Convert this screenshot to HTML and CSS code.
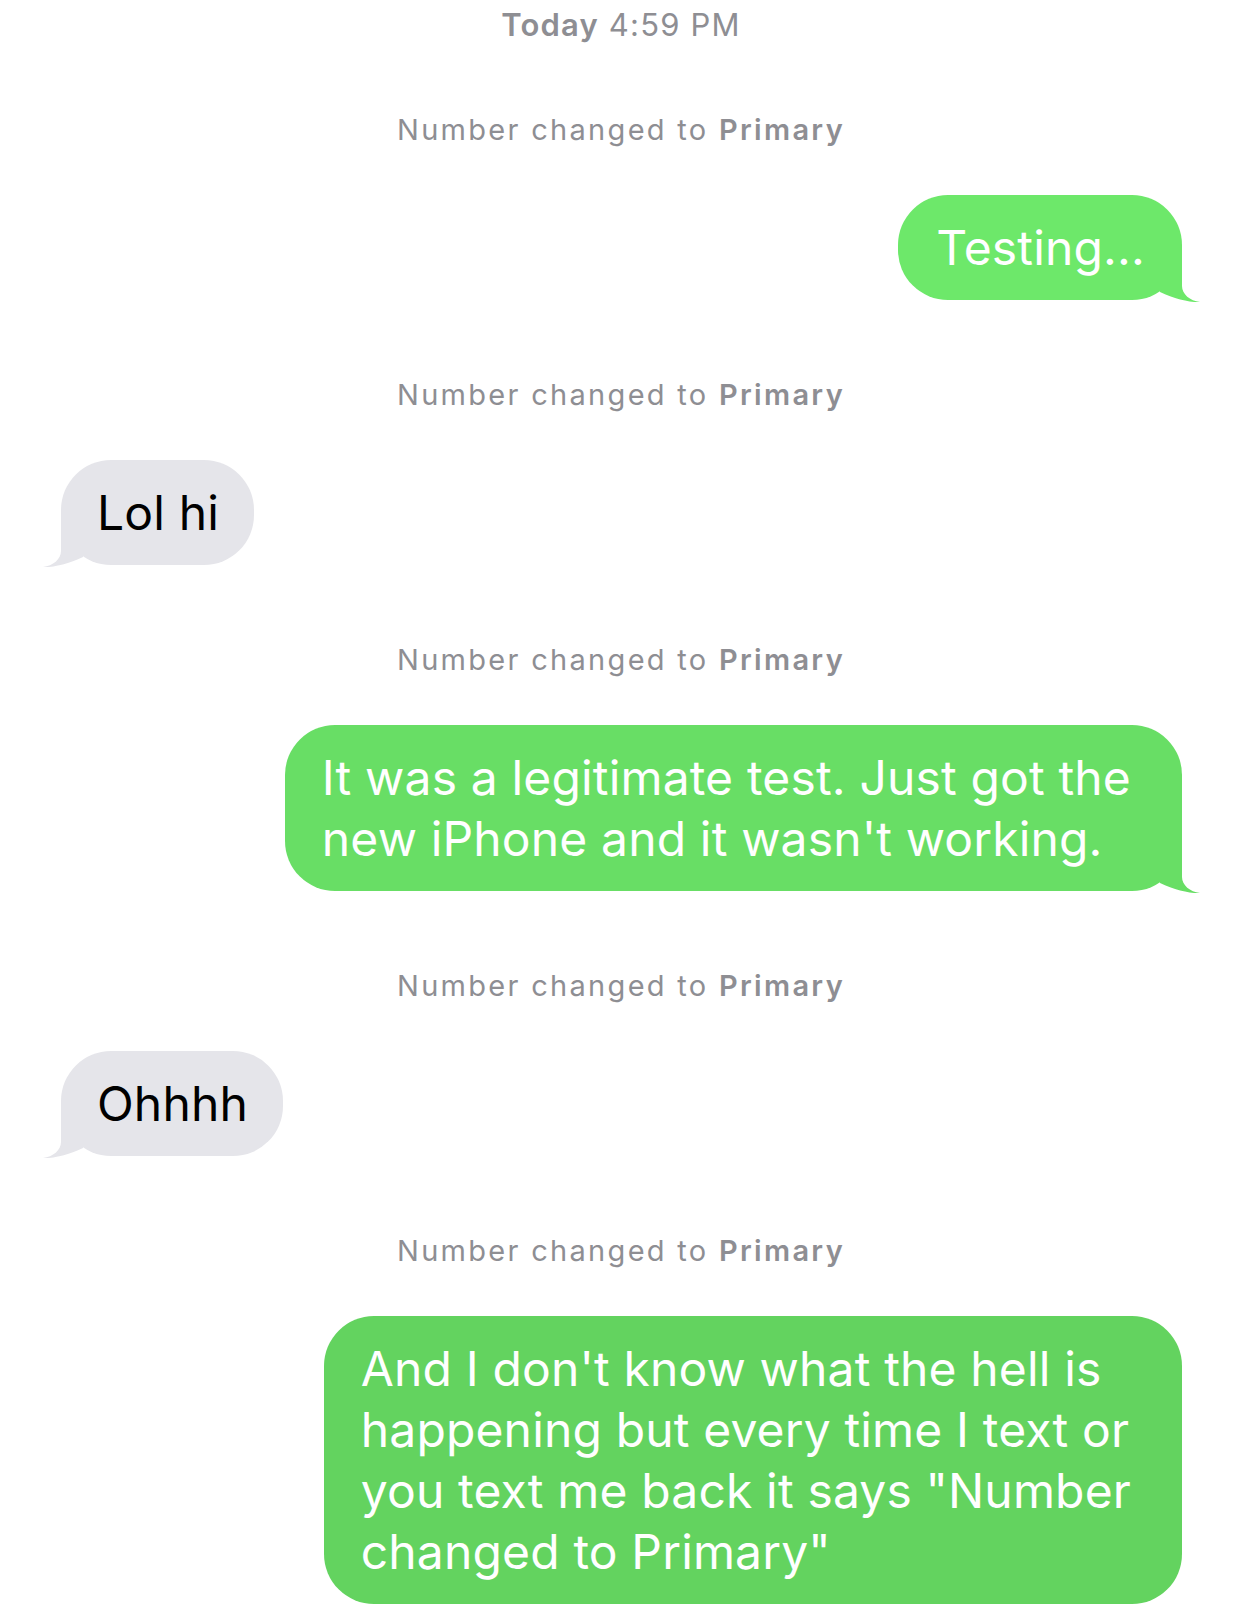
FILE: index.html
```html
<!DOCTYPE html>
<html lang="en">
<head>
<meta charset="utf-8">
<title>Messages</title>
<link rel="stylesheet" href="styles.css">
</head>
<body>
<main class="thread">
  <div class="stamp"><b>Today</b> 4:59 PM</div>

  <div class="sys">Number changed to <b>Primary</b></div>
  <div class="row out">
    <div class="bubble g1">Testing...<svg class="tail" viewBox="-22 -50 40 53" width="40" height="53"><path d="M0,-50 L0,-14 C0,-6 8,1 18,2 C8,2.5 -8,-1 -22,-8 L-22,-50 Z" fill="currentColor"/></svg></div>
  </div>

  <div class="sys">Number changed to <b>Primary</b></div>
  <div class="row in">
    <div class="bubble grey">Lol hi<svg class="tail" viewBox="-22 -50 40 53" width="40" height="53"><path d="M0,-50 L0,-14 C0,-6 8,1 18,2 C8,2.5 -8,-1 -22,-8 L-22,-50 Z" fill="currentColor"/></svg></div>
  </div>

  <div class="sys">Number changed to <b>Primary</b></div>
  <div class="row out">
    <div class="bubble multi g2">It was a legitimate test. Just got the<br>new iPhone and it wasn't working.<svg class="tail" viewBox="-22 -50 40 53" width="40" height="53"><path d="M0,-50 L0,-14 C0,-6 8,1 18,2 C8,2.5 -8,-1 -22,-8 L-22,-50 Z" fill="currentColor"/></svg></div>
  </div>

  <div class="sys">Number changed to <b>Primary</b></div>
  <div class="row in">
    <div class="bubble grey">Ohhhh<svg class="tail" viewBox="-22 -50 40 53" width="40" height="53"><path d="M0,-50 L0,-14 C0,-6 8,1 18,2 C8,2.5 -8,-1 -22,-8 L-22,-50 Z" fill="currentColor"/></svg></div>
  </div>

  <div class="sys">Number changed to <b>Primary</b></div>
  <div class="row out">
    <div class="bubble multi g3">And I don't know what the hell is<br>happening but every time I text or<br>you text me back it says "Number<br>changed to Primary"</div>
  </div>
</main>
</body>
</html>
```

FILE: styles.css
```css
html, body {
  margin: 0;
  padding: 0;
  background: #ffffff;
}

body {
  width: 1242px;
  height: 1606px;
  overflow: hidden;
  font-family: Inter, "Liberation Sans", Arial, sans-serif;
}

.thread {
  display: flex;
  flex-direction: column;
  padding-top: 6px;
}

.stamp {
  text-align: center;
  font-size: 31px;
  line-height: 38px;
  color: #8e8e93;
  letter-spacing: 1.2px;
  font-weight: 400;
  margin-bottom: 69px;
}

.stamp b {
  font-weight: 600;
}

.sys {
  text-align: center;
  font-size: 29px;
  line-height: 34px;
  color: #8e8e93;
  letter-spacing: 2.3px;
  margin-bottom: 48px;
}

.sys b {
  font-weight: 600;
}

.row {
  display: flex;
  margin-bottom: 78px;
}

.row.out {
  justify-content: flex-end;
  padding-right: 60px;
}

.row.in {
  justify-content: flex-start;
  padding-left: 61px;
}

.bubble {
  position: relative;
  font-size: 48px;
  line-height: 61px;
  padding: 22px 37px 22px 38px;
  border-radius: 50px;
  white-space: nowrap;
  letter-spacing: 0.15px;
}

.bubble.multi {
  padding-left: 37px;
  padding-right: 51px;
}

.out .bubble {
  color: #ffffff;
}

.bubble.g1 { background: #6de86a; }
.bubble.g2 { background: #68de65; }
.bubble.g3 { background: #63d35f; }
.bubble.grey {
  background: #e5e5ea;
  color: #000000;
  padding-left: 36px;
  padding-right: 35px;
}

.tail {
  position: absolute;
  right: -18px;
  bottom: -3px;
  overflow: visible;
}

.g1 .tail { color: #6de86a; }
.g2 .tail { color: #68de65; }
.grey .tail { color: #e5e5ea; }

.in .tail {
  right: auto;
  left: -18px;
  transform: scaleX(-1);
}
```
